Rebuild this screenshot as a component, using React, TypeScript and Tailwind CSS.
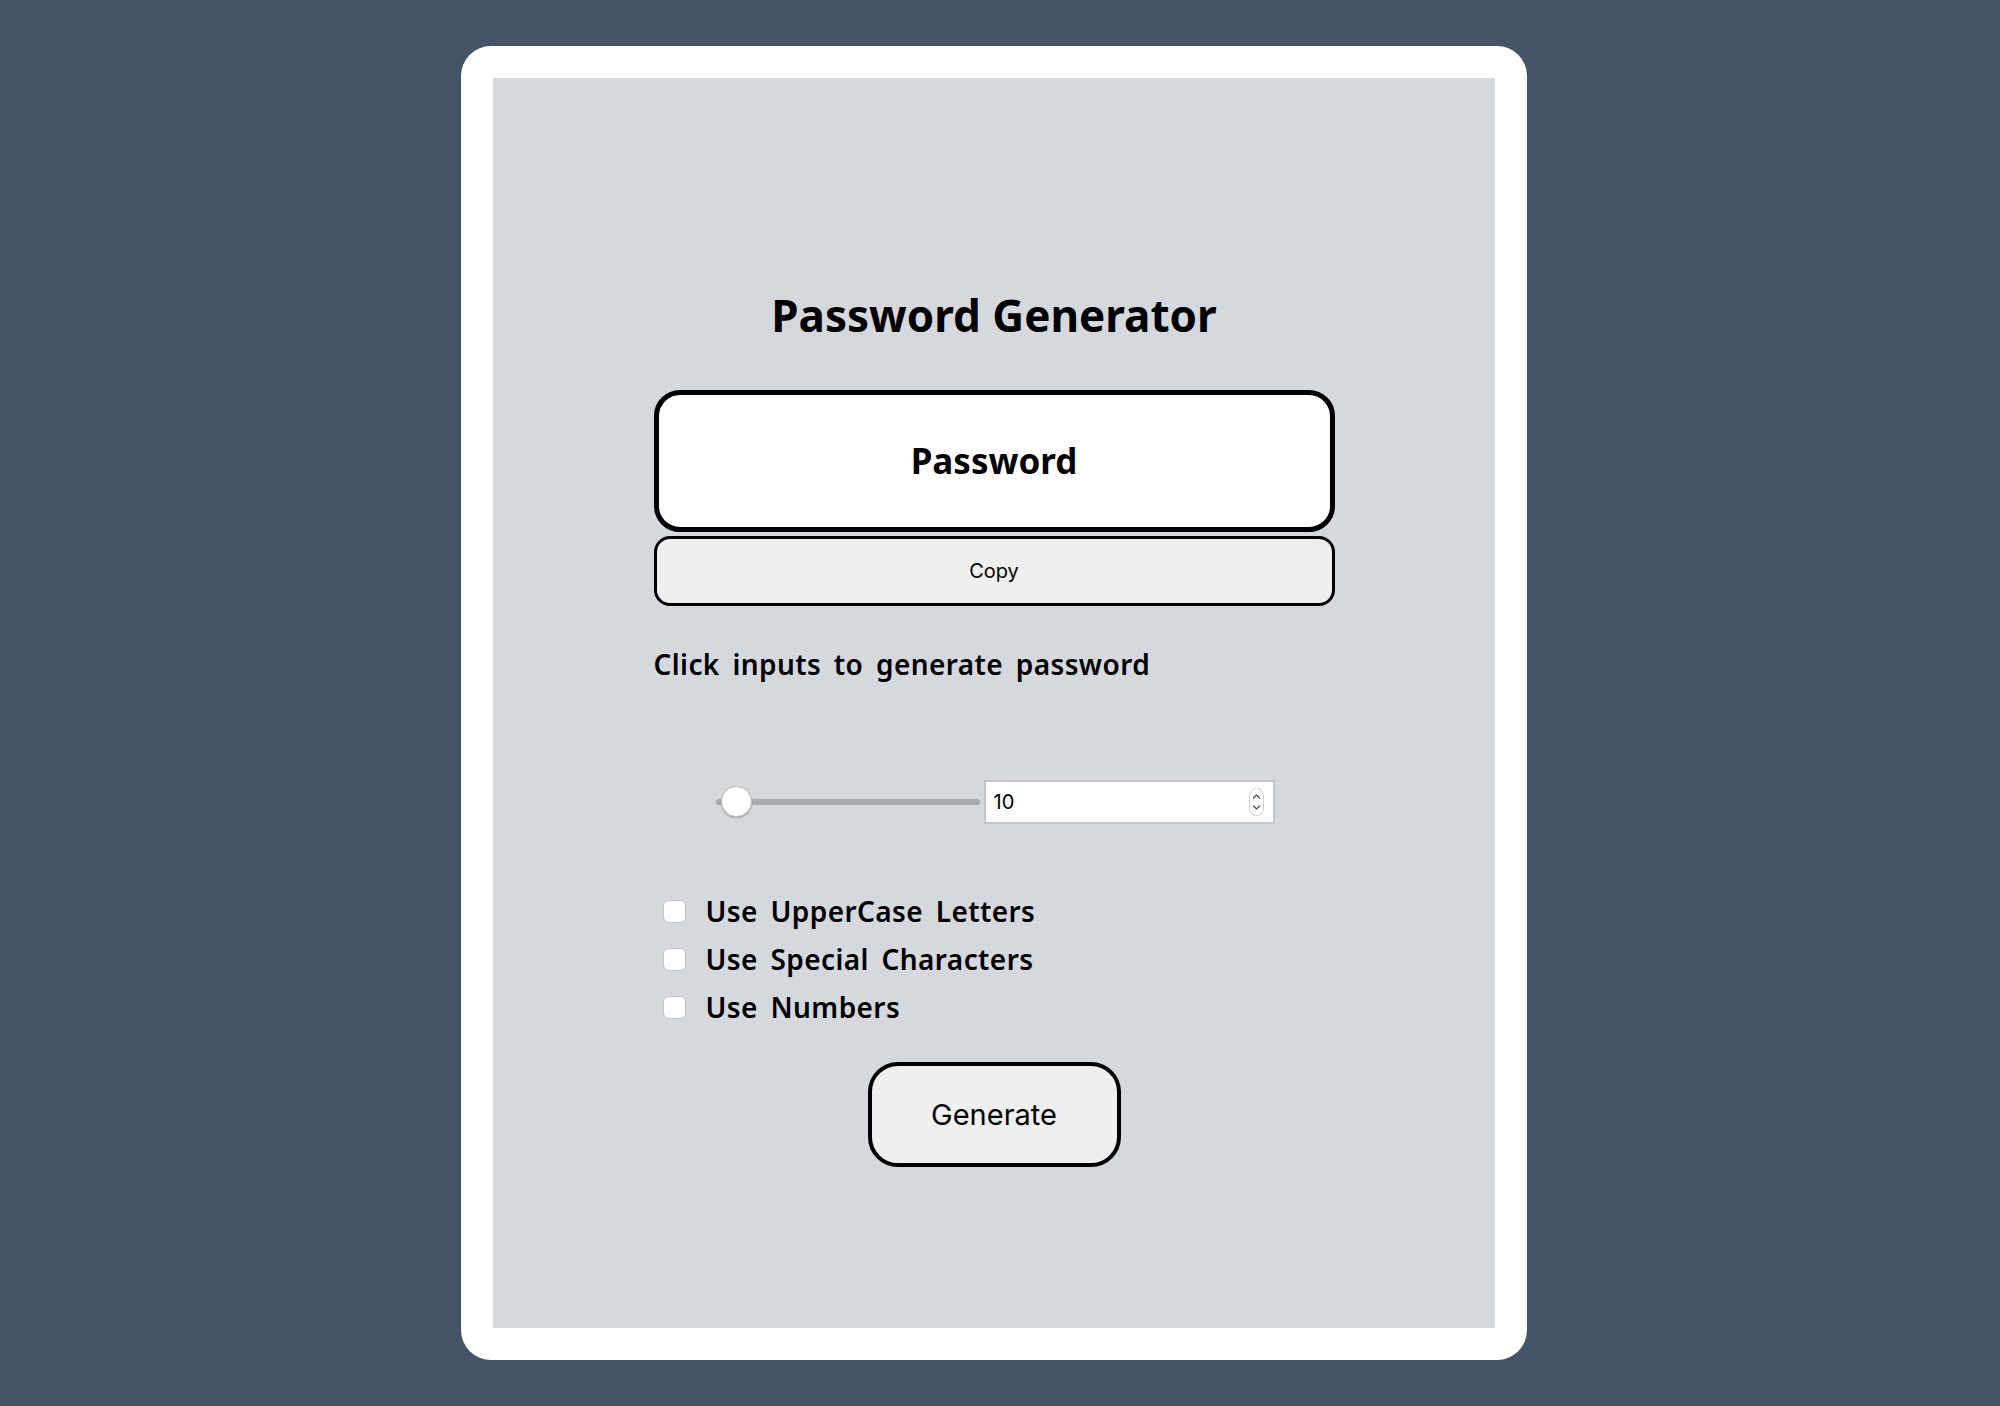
export default function App() {
  const kanit = { fontFamily: '"Noto Sans", "Open Sans", sans-serif' };
  const sys = { fontFamily: 'Inter, "Liberation Sans", sans-serif' };
  return (
    <div className="min-h-[1406px] w-full bg-[#425466] flex justify-center pt-[46px] pr-[12px]">
      <div className="w-[1066px] h-[1314px] bg-white rounded-[30px] p-[32px]">
        <div className="h-full bg-[#d5d8dd] flex flex-col items-center text-black" style={kanit}>
          <h1 className="mt-[209px] text-[44px] leading-[56px] font-bold">Password Generator</h1>
          <div className="mt-[47px] w-[681px] h-[142px] border-[5px] border-black rounded-[26px] bg-white flex items-center justify-center">
            <span className="text-[35px] font-bold">Password</span>
          </div>
          <button
            className="mt-[4px] w-[681px] h-[70px] border-[3px] border-black rounded-[16px] bg-[#efefef] text-[20px] flex items-center justify-center"
            style={sys}
          >
            Copy
          </button>
          <div className="w-[681px] mt-[40px]">
            <p className="text-[28px] leading-[36px] font-semibold tracking-[0.4px] [word-spacing:5px]">Click inputs to generate password</p>
          </div>
          <div className="mt-[98px] flex items-center h-[44px] pl-[2px]">
            <div className="relative w-[268px] h-[44px] flex items-center">
              <div className="w-[264px] h-[6px] rounded-full bg-[#a9aaad]" />
              <div className="absolute left-[5px] top-[6px] w-[31px] h-[31px] rounded-full bg-white border border-[#c4c4c4] shadow-[0_1px_2px_rgba(0,0,0,0.25)]" />
            </div>
            <div className="w-[291px] h-[44px] border-2 border-[#c6c6c8] bg-white flex items-center justify-between pl-[8px] pr-[9px]" style={sys}>
              <span className="text-[20px]">10</span>
              <svg width="15" height="28" viewBox="0 0 15 28">
                <rect x="0.5" y="0.5" width="14" height="27" rx="7" fill="white" stroke="#d0d0d0" />
                <path d="M4.5 10 L7.5 7 L10.5 10" fill="none" stroke="#555" strokeWidth="1.4" strokeLinecap="round" strokeLinejoin="round" />
                <path d="M4.5 18 L7.5 21 L10.5 18" fill="none" stroke="#555" strokeWidth="1.4" strokeLinecap="round" strokeLinejoin="round" />
              </svg>
            </div>
          </div>
          <div className="w-[681px] mt-[63px] flex flex-col pl-[9px]">
            {["Use UpperCase Letters", "Use Special Characters", "Use Numbers"].map((t) => (
              <label key={t} className="h-[48px] flex items-center gap-[20px]">
                <span className="w-[23px] h-[23px] rounded-[6px] bg-white border border-[#c4c4c4]" />
                <span className="text-[28px] font-semibold tracking-[0.4px] [word-spacing:5px]">{t}</span>
              </label>
            ))}
          </div>
          <button
            className="mt-[31px] w-[253px] h-[105px] border-[4px] border-black rounded-[30px] bg-[#efefef] text-[29px] flex items-center justify-center"
            style={sys}
          >
            Generate
          </button>
        </div>
      </div>
    </div>
  );
}
